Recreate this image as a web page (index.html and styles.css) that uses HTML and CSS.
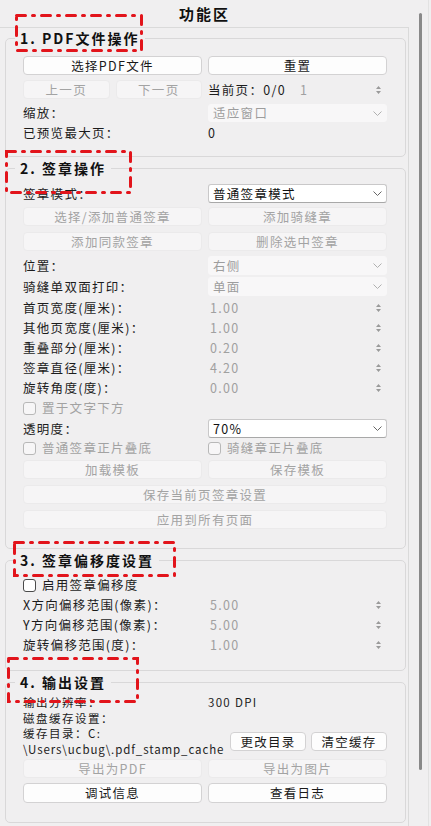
FILE: index.html
```html
<!DOCTYPE html>
<html lang="zh-CN">
<head>
    <meta charset="UTF-8">
    <meta name="viewport" content="width=device-width, initial-scale=1.0">
    <title>功能区</title>
    <link rel="stylesheet" href="styles.css">
</head>
<body>
<div class="window">
    <div class="panel">
        <div class="panel-title">功能区</div>
        <div class="panel-frame">

            <fieldset class="group g1">
                <legend>1. PDF文件操作</legend>
                <div class="grid">
                    <button class="btn">选择PDF文件</button>
                    <button class="btn">重置</button>
                </div>
                <div class="grid mt5">
                    <div class="pair">
                        <button class="btn" disabled>上一页</button>
                        <button class="btn" disabled>下一页</button>
                    </div>
                    <div class="page-info">
                        <span>当前页：0/0</span>
                        <span class="spin off page-spin">1
                            <svg class="arrows" width="7" height="12" viewBox="0 0 7 12"><path d="M1 5L3.5 2L6 5Z M1 7L3.5 10L6 7Z" fill="#9a9a9a"/></svg>
                        </span>
                    </div>
                </div>
                <div class="grid mt5">
                    <span>缩放：</span>
                    <div class="combo off h18">适应窗口
                        <svg class="chev" width="9" height="5" viewBox="0 0 9 5"><path d="M0.5 0.5L4.5 4.5L8.5 0.5" fill="none" stroke="#b0b0b0"/></svg>
                    </div>
                </div>
                <div class="grid line mt1">
                    <span>已预览最大页：</span>
                    <span>0</span>
                </div>
            </fieldset>

            <fieldset class="group g2">
                <legend>2. 签章操作</legend>
                <div class="grid">
                    <span>签章模式：</span>
                    <div class="combo">普通签章模式
                        <svg class="chev" width="9" height="5" viewBox="0 0 9 5"><path d="M0.5 0.5L4.5 4.5L8.5 0.5" fill="none" stroke="#666"/></svg>
                    </div>
                </div>
                <div class="grid mt4">
                    <button class="btn" disabled>选择/添加普通签章</button>
                    <button class="btn" disabled>添加骑缝章</button>
                </div>
                <div class="grid mt6">
                    <button class="btn" disabled>添加同款签章</button>
                    <button class="btn" disabled>删除选中签章</button>
                </div>
                <div class="grid mt5">
                    <span>位置：</span>
                    <div class="combo off">右侧
                        <svg class="chev" width="9" height="5" viewBox="0 0 9 5"><path d="M0.5 0.5L4.5 4.5L8.5 0.5" fill="none" stroke="#b0b0b0"/></svg>
                    </div>
                </div>
                <div class="grid mt2">
                    <span>骑缝单双面打印：</span>
                    <div class="combo off">单面
                        <svg class="chev" width="9" height="5" viewBox="0 0 9 5"><path d="M0.5 0.5L4.5 4.5L8.5 0.5" fill="none" stroke="#b0b0b0"/></svg>
                    </div>
                </div>
                <div class="grid line mt2">
                    <span>首页宽度(厘米)：</span>
                    <span class="spin off">1.00
                        <svg class="arrows" width="7" height="12" viewBox="0 0 7 12"><path d="M1 5L3.5 2L6 5Z M1 7L3.5 10L6 7Z" fill="#9a9a9a"/></svg>
                    </span>
                </div>
                <div class="grid line">
                    <span>其他页宽度(厘米)：</span>
                    <span class="spin off">1.00
                        <svg class="arrows" width="7" height="12" viewBox="0 0 7 12"><path d="M1 5L3.5 2L6 5Z M1 7L3.5 10L6 7Z" fill="#9a9a9a"/></svg>
                    </span>
                </div>
                <div class="grid line">
                    <span>重叠部分(厘米)：</span>
                    <span class="spin off">0.20
                        <svg class="arrows" width="7" height="12" viewBox="0 0 7 12"><path d="M1 5L3.5 2L6 5Z M1 7L3.5 10L6 7Z" fill="#9a9a9a"/></svg>
                    </span>
                </div>
                <div class="grid line">
                    <span>签章直径(厘米)：</span>
                    <span class="spin off">4.20
                        <svg class="arrows" width="7" height="12" viewBox="0 0 7 12"><path d="M1 5L3.5 2L6 5Z M1 7L3.5 10L6 7Z" fill="#9a9a9a"/></svg>
                    </span>
                </div>
                <div class="grid line">
                    <span>旋转角度(度)：</span>
                    <span class="spin off">0.00
                        <svg class="arrows" width="7" height="12" viewBox="0 0 7 12"><path d="M1 5L3.5 2L6 5Z M1 7L3.5 10L6 7Z" fill="#9a9a9a"/></svg>
                    </span>
                </div>
                <div class="line">
                    <label class="check off"><span class="box"></span>置于文字下方</label>
                </div>
                <div class="grid mt1">
                    <span>透明度：</span>
                    <div class="combo">70%
                        <svg class="chev" width="9" height="5" viewBox="0 0 9 5"><path d="M0.5 0.5L4.5 4.5L8.5 0.5" fill="none" stroke="#666"/></svg>
                    </div>
                </div>
                <div class="grid line">
                    <label class="check off"><span class="box"></span>普通签章正片叠底</label>
                    <label class="check off"><span class="box"></span>骑缝章正片叠底</label>
                </div>
                <div class="grid mt2">
                    <button class="btn" disabled>加载模板</button>
                    <button class="btn" disabled>保存模板</button>
                </div>
                <button class="btn wide mt6" disabled>保存当前页签章设置</button>
                <button class="btn wide mt6" disabled>应用到所有页面</button>
            </fieldset>

            <fieldset class="group g3">
                <legend>3. 签章偏移度设置</legend>
                <div class="line">
                    <label class="check"><span class="box"></span>启用签章偏移度</label>
                </div>
                <div class="grid line">
                    <span>X方向偏移范围(像素)：</span>
                    <span class="spin off">5.00
                        <svg class="arrows" width="7" height="12" viewBox="0 0 7 12"><path d="M1 5L3.5 2L6 5Z M1 7L3.5 10L6 7Z" fill="#9a9a9a"/></svg>
                    </span>
                </div>
                <div class="grid line">
                    <span>Y方向偏移范围(像素)：</span>
                    <span class="spin off">5.00
                        <svg class="arrows" width="7" height="12" viewBox="0 0 7 12"><path d="M1 5L3.5 2L6 5Z M1 7L3.5 10L6 7Z" fill="#9a9a9a"/></svg>
                    </span>
                </div>
                <div class="grid line">
                    <span>旋转偏移范围(度)：</span>
                    <span class="spin off">1.00
                        <svg class="arrows" width="7" height="12" viewBox="0 0 7 12"><path d="M1 5L3.5 2L6 5Z M1 7L3.5 10L6 7Z" fill="#9a9a9a"/></svg>
                    </span>
                </div>
            </fieldset>

            <fieldset class="group g4">
                <legend>4. 输出设置</legend>
                <div class="out">
                    <div class="grid">
                        <span>输出分辨率：</span>
                        <span class="dpi">300 DPI</span>
                    </div>
                    <div>磁盘缓存设置：</div>
                    <div class="cache">
                        <div class="cache-path">缓存目录：C:<br><span class="path">\Users\ucbug\.pdf_stamp_cache</span></div>
                        <div class="cache-btns">
                            <button class="btn">更改目录</button>
                            <button class="btn">清空缓存</button>
                        </div>
                    </div>
                </div>
                <div class="grid mt2">
                    <button class="btn" disabled>导出为PDF</button>
                    <button class="btn" disabled>导出为图片</button>
                </div>
                <div class="grid mt5">
                    <button class="btn h20">调试信息</button>
                    <button class="btn h20">查看日志</button>
                </div>
            </fieldset>

        </div>
    </div>
    <div class="scroll"><div class="thumb"></div></div>

    <!-- red annotation marks drawn over the screenshot -->
    <svg class="mark mark-1" width="128" height="38"><rect x="1.5" y="1.5" width="125" height="35"/></svg>
    <svg class="mark mark-2" width="127" height="44"><rect x="1.5" y="1.5" width="124" height="41"/></svg>
    <svg class="mark mark-3" width="163" height="36"><rect x="1.5" y="1.5" width="160" height="33"/></svg>
    <svg class="mark mark-4" width="132" height="46"><rect x="1.5" y="1.5" width="129" height="43"/></svg>
</div>
</body>
</html>
```

FILE: styles.css
```css
body {
    margin: 0;
    background-color: #f0eff0;
    font-family: "Noto Sans CJK SC", "Noto Sans", sans-serif;
    font-size: 12.5px;
    line-height: 16px;
    letter-spacing: 1.3px;
    color: #1c1c1c;
}

.window {
    position: relative;
    display: flex;
    width: 431px;
    height: 826px;
    overflow: hidden;
}

.panel {
    width: 409px;
}

.panel-title {
    height: 27px;
    line-height: 27px;
    text-align: center;
    font-size: 15px;
    font-weight: bold;
    letter-spacing: 2px;
    color: #111;
}

.panel-frame {
    border-top: 1px solid #dadada;
    border-right: 1px solid #dadada;
    height: 820px;
}

.group {
    box-sizing: border-box;
    width: 401px;
    min-width: 0;
    margin: 2px 0 0 5px;
    padding: 7px 18px 19px 17px;
    border: 1px solid #d9d8d9;
    border-radius: 5px;
}

.g1 {
    margin-top: 1px;
    padding-top: 9px;
    padding-bottom: 13px;
}

.g3 {
    padding-top: 6px;
    padding-bottom: 15px;
}

.g4 {
    padding-top: 4px;
    padding-bottom: 19px;
}

legend {
    font-size: 14px;
    font-weight: bold;
    line-height: 18px;
    letter-spacing: 2px;
    padding: 0 5px;
    margin-left: -8px;
    color: #111;
}

.grid {
    display: grid;
    grid-template-columns: 1fr 1fr;
    column-gap: 6px;
    align-items: center;
}

.line {
    height: 20px;
    display: flex;
    align-items: center;
}

.line.grid {
    display: grid;
}

.mt1 { margin-top: 1px; }
.mt2 { margin-top: 2px; }
.mt4 { margin-top: 4px; }
.mt5 { margin-top: 5px; }
.mt6 { margin-top: 6px; }

.btn {
    display: flex;
    align-items: center;
    justify-content: center;
    box-sizing: border-box;
    height: 19px;
    padding: 0;
    border: 1px solid #d3d2d3;
    border-radius: 4px;
    background-color: #fdfdfd;
    font: inherit;
    letter-spacing: inherit;
    color: #1a1a1a;
}

.btn:disabled {
    background-color: #f6f5f6;
    border-color: #ebeaeb;
    color: #a3a3a3;
}

.btn.wide {
    width: 100%;
}

.btn.h20 {
    height: 20px;
}

.pair {
    display: grid;
    grid-template-columns: 1fr 1fr;
    column-gap: 6px;
}

.page-info {
    display: flex;
    align-items: center;
}

.page-spin {
    flex: 1;
    margin-left: 12px;
}

.combo {
    display: flex;
    align-items: center;
    justify-content: space-between;
    box-sizing: border-box;
    height: 19px;
    padding: 0 4px 0 4px;
    border: 1px solid #c9c8c9;
    border-bottom-color: #a8a8a8;
    border-radius: 3px;
    background-color: #fff;
    color: #111;
}

.combo.off {
    background-color: #f8f7f8;
    border-color: #f8f7f8;
    color: #9d9d9d;
}

.combo.h18 {
    height: 18px;
}

.spin {
    display: flex;
    align-items: center;
    justify-content: space-between;
    padding: 0 5px 0 2px;
}

.spin.off {
    color: #a0a0a0;
}

.check {
    display: flex;
    align-items: center;
    gap: 6px;
}

.check .box {
    box-sizing: border-box;
    width: 13px;
    height: 13px;
    border: 1px solid #4a4a4a;
    border-radius: 3px;
    background-color: #fff;
}

.check.off {
    color: #a2a2a2;
}

.check.off .box {
    border-color: #b8b8b8;
    background-color: #f7f6f7;
}

.out {
    font-size: 11.5px;
    line-height: 15.5px;
    letter-spacing: 1.5px;
}

.dpi {
    letter-spacing: 1.3px;
}

.cache {
    display: flex;
    align-items: center;
}

.cache-path {
    flex: 1;
    white-space: nowrap;
}

.path {
    letter-spacing: 0.9px;
}

.cache-btns {
    display: flex;
    gap: 5px;
    font-size: 12.5px;
    letter-spacing: 1.3px;
}

.cache-btns .btn {
    width: 76px;
}

.scroll {
    width: 19px;
    border-right: 1px solid #e2e2e2;
}

.thumb {
    width: 3px;
    height: 757px;
    margin: 13px 0 0 10px;
    border-radius: 2px;
    background-color: #898989;
}

.mark {
    position: absolute;
    overflow: visible;
}

.mark rect {
    fill: none;
    stroke: #e2141b;
    stroke-width: 3;
    stroke-linecap: round;
    stroke-dasharray: 9 7 2 7;
}

.mark-1 { left: 15px; top: 14px; }
.mark-2 { left: 5px; top: 150px; }
.mark-3 { left: 13px; top: 541px; }
.mark-4 { left: 7px; top: 657px; }
```
